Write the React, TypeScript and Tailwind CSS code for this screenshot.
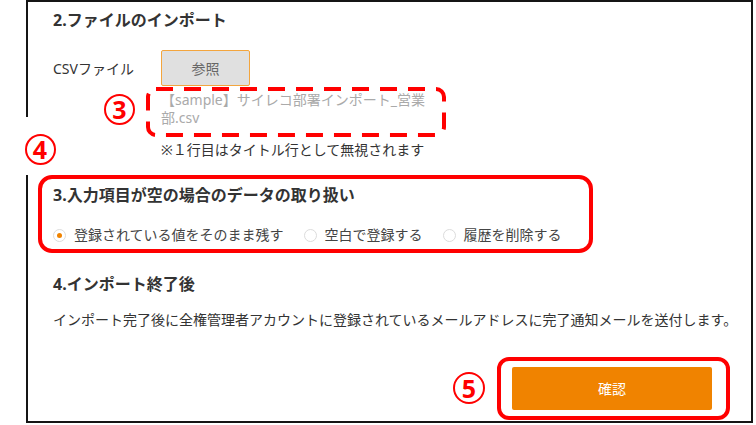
import React from "react";

const font = { fontFamily: '"Noto Sans", "Noto Sans CJK JP", sans-serif' };

function Circled({ n, className }: { n: string; className: string }) {
  return (
    <div
      className={`absolute flex items-center justify-center rounded-full border-2 border-[#ff0000] bg-white text-[#ff0000] font-bold text-[25px] leading-none ${className}`}
    >
      {n}
    </div>
  );
}

function Radio({ label, checked }: { label: string; checked?: boolean }) {
  return (
    <div className="flex items-center gap-[8px]">
      <span className="w-[13px] h-[13px] rounded-full border border-[#dcdcdc] flex items-center justify-center bg-white">
        {checked && <span className="w-[5px] h-[5px] rounded-full bg-[#f08300]" />}
      </span>
      <span className="text-[14px] leading-[20px] text-[#444]">{label}</span>
    </div>
  );
}

export default function App() {
  return (
    <div className="relative w-[756px] h-[425px] bg-white overflow-hidden" style={font}>
      <div className="ml-[26px] w-[727px] h-[423px] border-2 border-[#151515] pl-[25px] flex flex-col">
        <h2 className="mt-[6px] text-[16px] leading-[24px] font-bold text-[#333]">2.ファイルのインポート</h2>

        <div className="mt-[18px] flex">
          <div className="w-[108px] h-[36px] flex items-center text-[14px] text-[#333]">CSVファイル</div>
          <div className="flex flex-col">
            <button className="w-[89px] h-[36px] bg-[#e0e0e0] border border-[#f3a53e] rounded-[2px] text-[14px] text-[#666]">
              参照
            </button>
            <div className="mt-[5px] text-[14px] leading-[18px] text-[#aaa]">
              【sample】サイレコ部署インポート_営業
              <br />
              部.csv
            </div>
            <div className="mt-[14px] text-[14px] leading-[18px] text-[#333]">※１行目はタイトル行として無視されます</div>
          </div>
        </div>

        <div className="mt-[16px] ml-[-15px] w-[555px] border-4 border-[#ff0000] rounded-[14px] pl-[11px] pt-[4px] pb-[4px]">
          <h2 className="text-[16px] leading-[24px] font-bold text-[#333]">3.入力項目が空の場合のデータの取り扱い</h2>
          <div className="mt-[18px] h-[20px] flex items-center gap-[20px]">
            <Radio label="登録されている値をそのまま残す" checked />
            <Radio label="空白で登録する" />
            <Radio label="履歴を削除する" />
          </div>
        </div>

        <h2 className="mt-[19px] text-[16px] leading-[24px] font-bold text-[#333]">4.インポート終了後</h2>
        <p className="mt-[14px] text-[14px] leading-[20px] text-[#333]">
          インポート完了後に全権管理者アカウントに登録されているメールアドレスに完了通知メールを送付します。
        </p>

        <div className="self-end mr-[21px] mt-[27px] border-4 border-[#ff0000] rounded-[12px] pl-[11px] pr-[14px] py-[6px]">
          <button className="w-[200px] h-[43px] bg-[#f08300] rounded-[2px] text-white text-[14px]">確認</button>
        </div>
      </div>

      {/* annotations */}
      <svg className="absolute left-[144px] top-[85px]" width="304" height="54" viewBox="0 0 304 54">
        <rect
          x="4"
          y="4"
          width="296"
          height="46"
          rx="8"
          fill="none"
          stroke="#ff0000"
          strokeWidth="4"
          strokeDasharray="17 11"
        />
      </svg>
      <Circled n="3" className="left-[104px] top-[94px] w-[31px] h-[31px]" />
      <div className="absolute left-[16px] top-[117px] w-[48px] h-[58px] bg-white flex justify-center pt-[17px]">
        <div className="w-[31px] h-[31px] flex items-center justify-center rounded-full border-2 border-[#ff0000] text-[#ff0000] font-bold text-[25px] leading-none">
          4
        </div>
      </div>
      <Circled n="5" className="left-[453px] top-[372px] w-[32px] h-[32px]" />
    </div>
  );
}
